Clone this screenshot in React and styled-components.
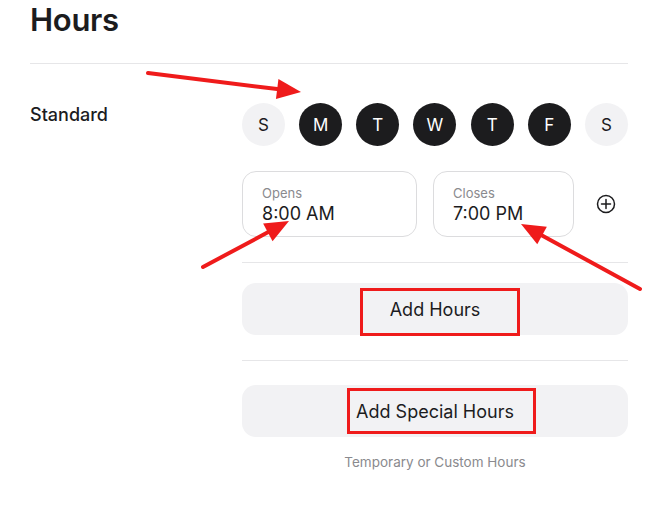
import styled, { createGlobalStyle } from 'styled-components';

const GlobalStyle = createGlobalStyle`
  body {
    margin: 0;
    background: #ffffff;
    font-family: Inter, "Liberation Sans", Arial, sans-serif;
    color: #1c1c1e;
  }
`

const Page = styled.div`
  position: relative;
  width: 662px;
  height: 528px;
  padding: 0 34px 0 30px;
  box-sizing: border-box;
  overflow: hidden;
`

const Title = styled.h1`
  margin: 0;
  padding-top: 2px;
  font-size: 31px;
  line-height: 36px;
  font-weight: 600;
  letter-spacing: -0.3px;
`

const Divider = styled.hr`
  border: 0;
  height: 1px;
  background: #e6e6e8;
  margin: ${props => props.$margin || '0'};
`

const Section = styled.div`
  display: grid;
  grid-template-columns: 212px 1fr;
  padding-top: 39px;
`

const Label = styled.div`
  font-size: 18px;
  font-weight: 500;
  line-height: 22px;
  padding-top: 1px;
`

const Column = styled.div`
  display: flex;
  flex-direction: column;
`

const Days = styled.div`
  display: flex;
  justify-content: space-between;
`

const Day = styled.div`
  width: 43px;
  height: 43px;
  border-radius: 50%;
  display: flex;
  align-items: center;
  justify-content: center;
  font-size: 17px;
  background: ${props => props.$on ? '#1c1c1e' : '#f2f2f4'};
  color: ${props => props.$on ? '#ffffff' : '#1c1c1e'};
`

const TimeRow = styled.div`
  display: flex;
  align-items: center;
  gap: 16px;
  margin-top: 25px;
`

const TimeBox = styled.div`
  width: ${props => props.$width}px;
  height: 66px;
  box-sizing: border-box;
  border: 1px solid #dcdcde;
  border-radius: 14px;
  padding: 13px 0 0 19px;
`

const TimeLabel = styled.div`
  font-size: 13px;
  line-height: 17px;
  color: #8a8a8e;
`

const TimeValue = styled.div`
  font-size: 18px;
  line-height: 23px;
`

const AddIcon = styled.div`
  margin-left: 6px;
  display: flex;
`

const Button = styled.div`
  height: 52px;
  border-radius: 14px;
  background: #f2f2f4;
  display: flex;
  align-items: center;
  justify-content: center;
  font-size: 18px;
`

const Caption = styled.div`
  margin-top: 17px;
  text-align: center;
  font-size: 13.5px;
  color: #8a8a8e;
`

const Marks = styled.svg`
  position: absolute;
  left: 0;
  top: 0;
  pointer-events: none;
`

const days = [
  { d: 'S', on: false },
  { d: 'M', on: true },
  { d: 'T', on: true },
  { d: 'W', on: true },
  { d: 'T', on: true },
  { d: 'F', on: true },
  { d: 'S', on: false },
];

const Arrow = ({ x1, y1, x2, y2 }) => {
  const a = Math.atan2(y2 - y1, x2 - x1);
  const len = 24, half = 10;
  const bx = x2 - Math.cos(a) * len, by = y2 - Math.sin(a) * len;
  const px = -Math.sin(a) * half, py = Math.cos(a) * half;
  return (
    <g>
      <line x1={x1} y1={y1} x2={bx} y2={by} stroke="#ef1b1b" strokeWidth="4" strokeLinecap="round" />
      <polygon points={`${x2},${y2} ${bx + px},${by + py} ${bx - px},${by - py}`} fill="#ef1b1b" />
    </g>
  );
};

const App = () => {
  return (
    <Page>
      <GlobalStyle />
      <Title>Hours</Title>
      <Divider $margin="25px 0 0" />
      <Section>
        <Label>Standard</Label>
        <Column>
          <Days>
            {days.map((day, i) => <Day key={i} $on={day.on}>{day.d}</Day>)}
          </Days>
          <TimeRow>
            <TimeBox $width={175}>
              <TimeLabel>Opens</TimeLabel>
              <TimeValue>8:00 AM</TimeValue>
            </TimeBox>
            <TimeBox $width={141}>
              <TimeLabel>Closes</TimeLabel>
              <TimeValue>7:00 PM</TimeValue>
            </TimeBox>
            <AddIcon>
              <svg width="20" height="20" viewBox="0 0 20 20" fill="none" stroke="#1c1c1e" strokeWidth="1.5">
                <circle cx="10" cy="10" r="8.5" />
                <path d="M10 5.5v9M5.5 10h9" strokeLinecap="round" />
              </svg>
            </AddIcon>
          </TimeRow>
          <Divider $margin="25px 0 20px" />
          <Button>Add Hours</Button>
          <Divider $margin="25px 0 24px" />
          <Button>Add Special Hours</Button>
          <Caption>Temporary or Custom Hours</Caption>
        </Column>
      </Section>
      <Marks width="662" height="528">
        <Arrow x1={148} y1={73} x2={301} y2={92} />
        <Arrow x1={203} y1={267} x2={289} y2={221} />
        <Arrow x1={640} y1={289} x2={521} y2={224} />
        <rect x="361.5" y="289.5" width="157" height="45" fill="none" stroke="#ef1b1b" strokeWidth="3" />
        <rect x="348.5" y="389.5" width="186" height="43" fill="none" stroke="#ef1b1b" strokeWidth="3" />
      </Marks>
    </Page>
  );
};

export default App;
